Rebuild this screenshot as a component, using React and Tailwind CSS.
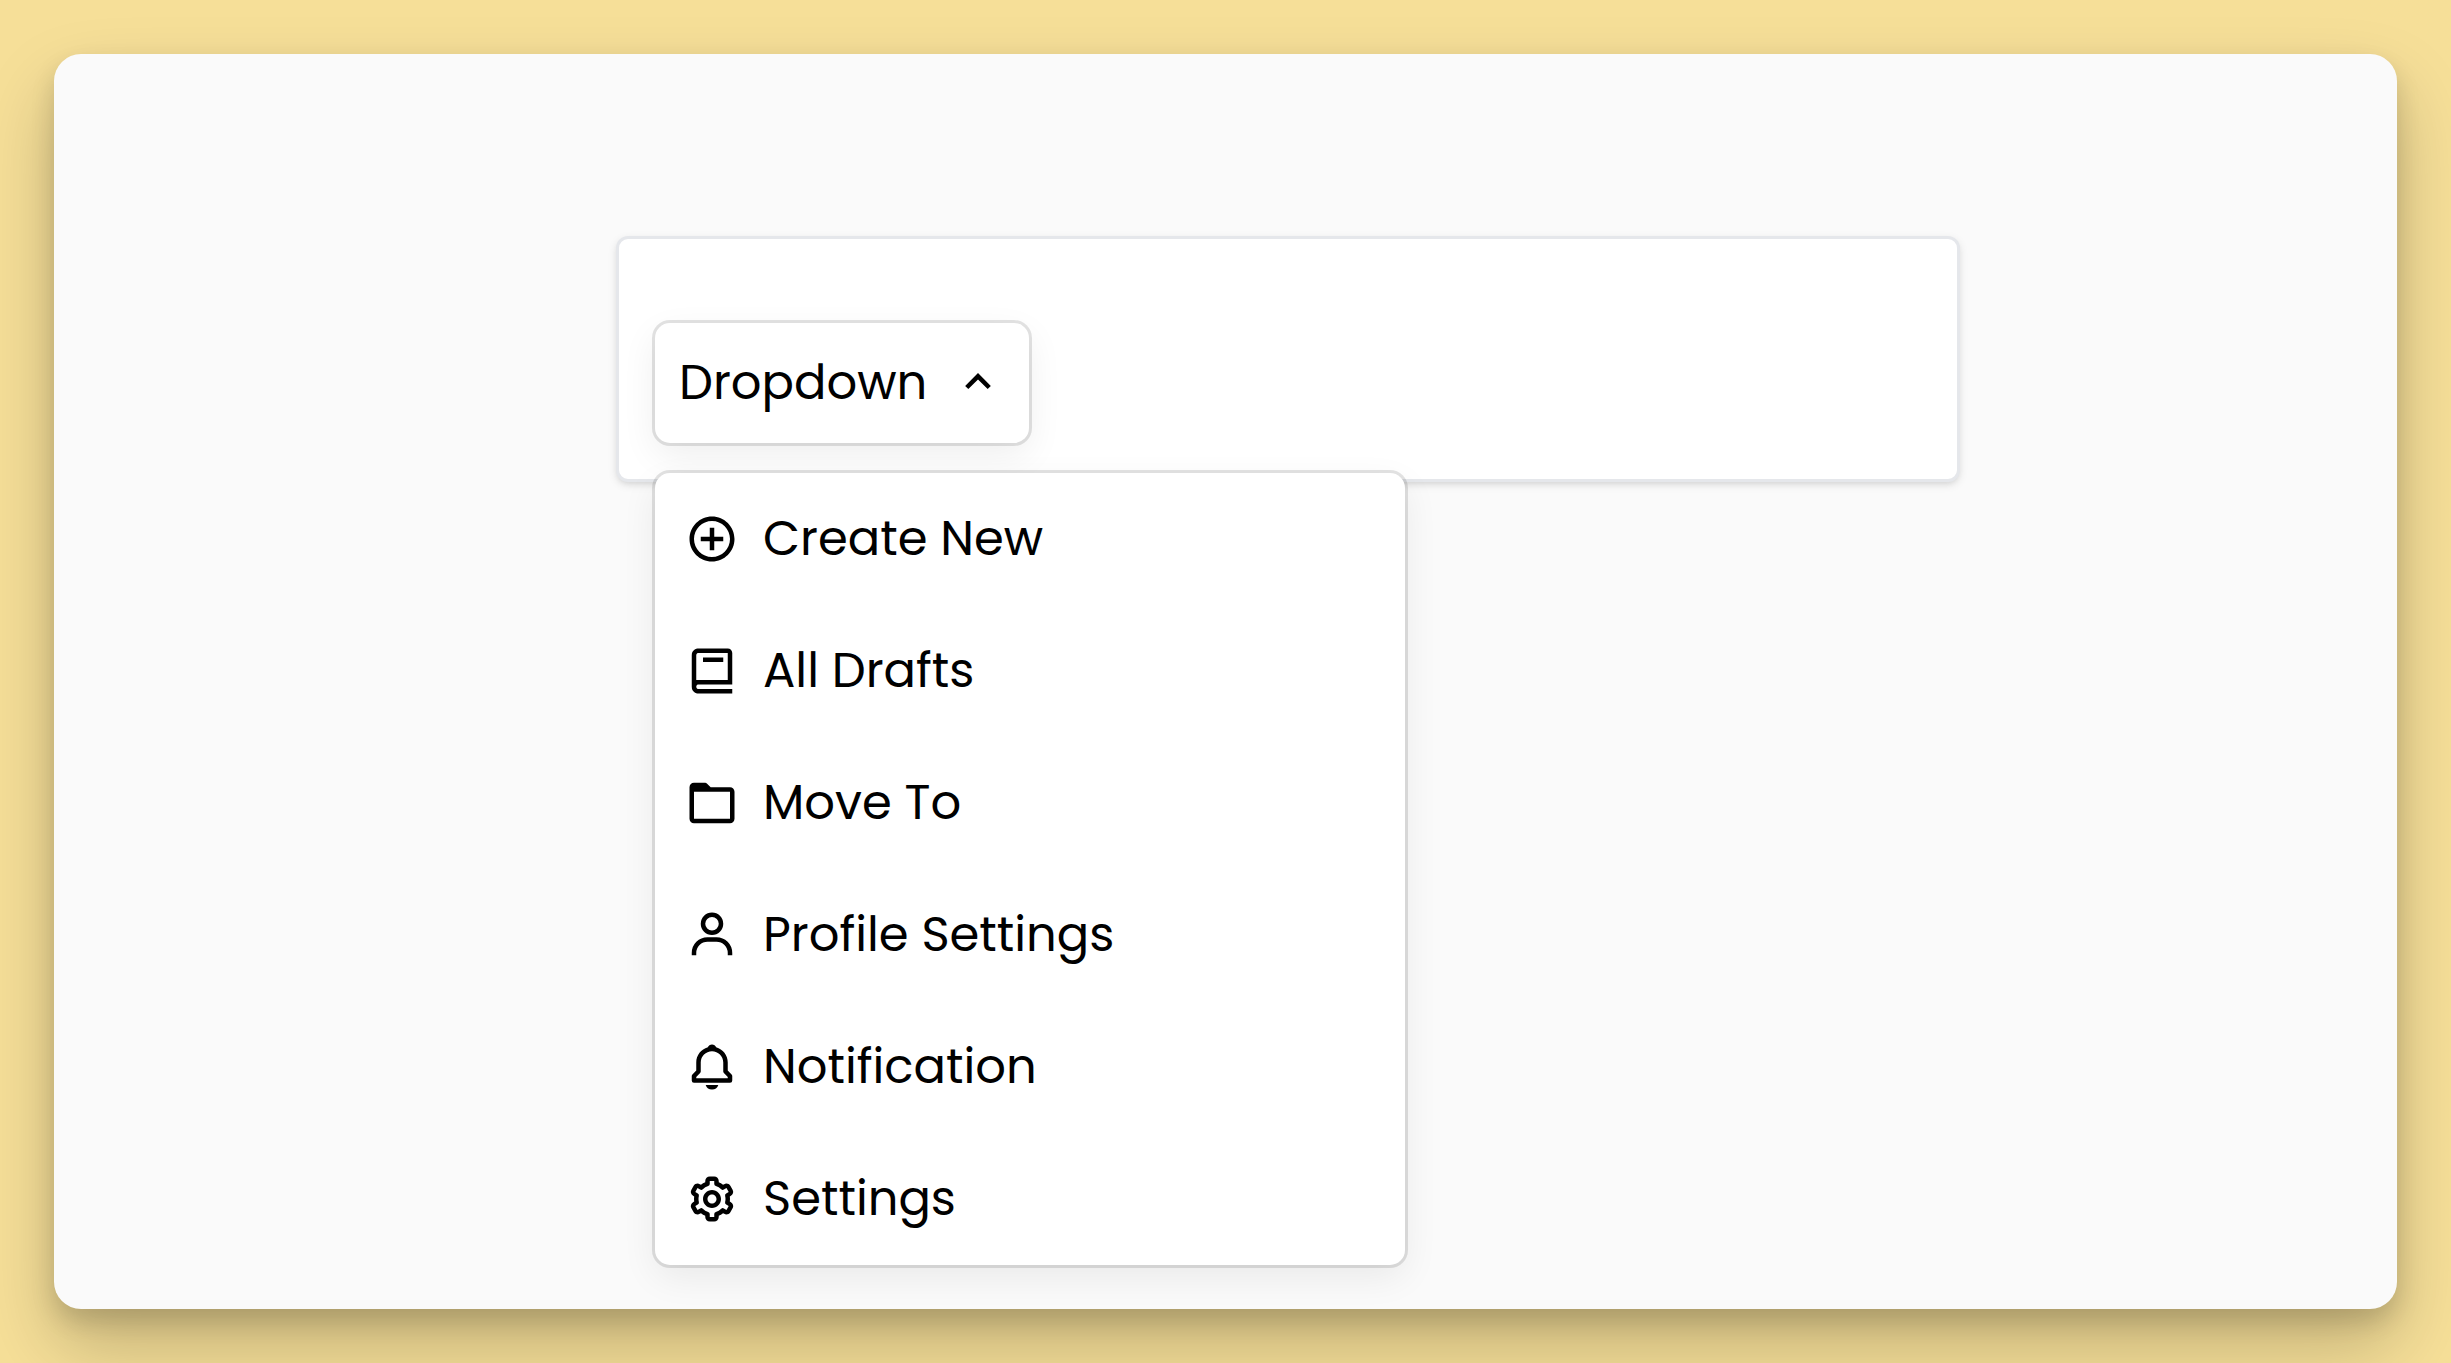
import { useState } from "react";
import {
  BiBell,
  BiBook,
  BiChevronDown,
  BiChevronUp,
  BiCog,
  BiFolder,
  BiPlusCircle,
  BiUser,
} from "react-icons/bi";

const items = [
  { label: "Create New", Icon: BiPlusCircle },
  { label: "All Drafts", Icon: BiBook },
  { label: "Move To", Icon: BiFolder },
  { label: "Profile Settings", Icon: BiUser },
  { label: "Notification", Icon: BiBell },
  { label: "Settings", Icon: BiCog },
];

function Dropdown() {
  const [open, setOpen] = useState(true);
  const Chevron = open ? BiChevronUp : BiChevronDown;

  return (
    <div className="relative w-fit">
      <button
        type="button"
        aria-haspopup="menu"
        aria-expanded={open}
        onClick={() => setOpen(!open)}
        className="flex h-[120px] w-[374px] items-center justify-between rounded-[15px] bg-white px-6 shadow-[0_12px_36px_rgba(0,0,0,0.07)] ring-3 ring-black/11"
      >
        <span>Dropdown</span>
        <Chevron className="size-[54px] shrink-0" aria-hidden="true" />
      </button>
      {open && (
        <ul
          role="menu"
          className="absolute top-full left-0 mt-[30px] w-[750px] rounded-[15px] bg-white shadow-[0_12px_36px_rgba(0,0,0,0.07)] ring-3 ring-black/11"
        >
          {items.map(({ label, Icon }) => (
            <li key={label} role="none">
              <button
                type="button"
                role="menuitem"
                className="flex h-[132px] w-full items-center gap-6 px-[30px] text-left"
              >
                <Icon className="size-[54px] shrink-0" aria-hidden="true" />
                <span>{label}</span>
              </button>
            </li>
          ))}
        </ul>
      )}
    </div>
  );
}

export default function App() {
  return (
    <div className="flex min-h-screen bg-[#f6df98] p-[54px] font-['Poppins','Inter',sans-serif] text-[48px] leading-[72px] text-black">
      <main className="grow rounded-[27px] bg-[#fafafa] pt-[182px] pr-[437px] pl-[562px] shadow-[0_36px_72px_rgba(0,0,0,0.22),0_12px_24px_rgba(0,0,0,0.14)]">
        <section className="rounded-xl border-3 border-gray-200 bg-white px-9 pt-[84px] pb-9 shadow-[0_3px_9px_rgba(0,0,0,0.1),0_3px_6px_-3px_rgba(0,0,0,0.1)]">
          <Dropdown />
        </section>
      </main>
    </div>
  );
}
